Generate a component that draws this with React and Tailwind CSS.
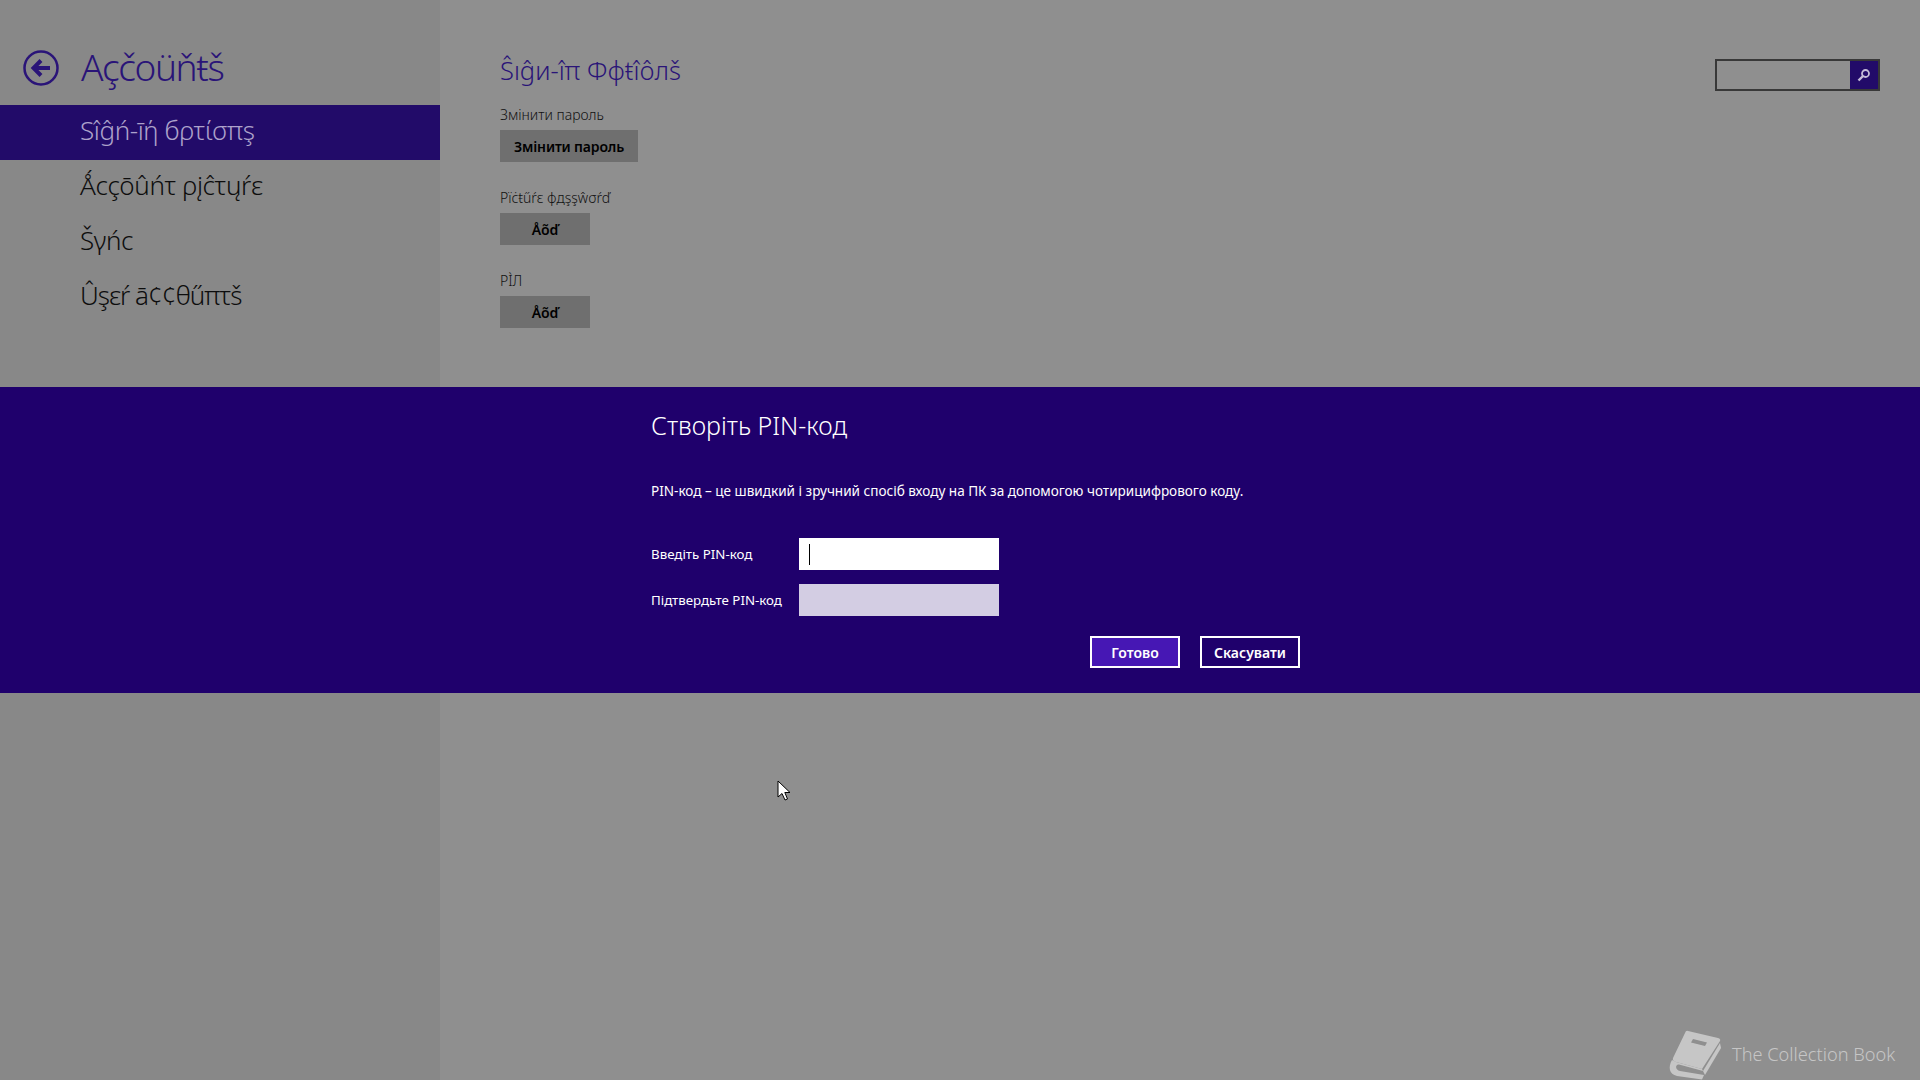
const NavItem = ({ label, active, tight }) => (
  <div
    className={`h-[55px] pl-[80px] pb-[4px] flex items-center text-[26px] font-light ${
      tight ? "tracking-[-1px]" : "tracking-[-0.4px]"
    } ${active ? "bg-[#220b69] text-[#ada2cb]" : "text-[#0d0d0d]"}`}
  >
    {label}
  </div>
);

const Field = ({ label, button, width }) => (
  <div className="mb-[19px]">
    <div className="h-[32px] pt-[6px] text-[14px] leading-[22px] text-[#111] font-light">{label}</div>
    <div className={`${width} h-[32px] bg-[#6f6f6f] flex items-center justify-center text-[14px] tracking-[-0.15px] font-semibold text-black`}>
      {button}
    </div>
  </div>
);

const App = () => {
  return (
    <div className="relative w-full h-screen overflow-hidden flex flex-col bg-[#8f8f8f] font-['Noto_Sans',sans-serif]">
      {/* TOP AREA */}
      <div className="h-[387px] flex shrink-0">
        <div className="w-[440px] bg-[#888888]">
          <div className="h-[105px] pl-[23px] pt-[50px] flex items-start gap-[22px]">
            <svg width="36" height="36" viewBox="0 0 36 36" fill="none" stroke="#2a1478">
              <circle cx="18" cy="18" r="16.5" strokeWidth="2.5" />
              <path d="M27 18H11M18 10.5L10.5 18L18 25.5" strokeWidth="4" />
            </svg>
            <div className="-mt-[2px] text-[37px] tracking-[-1.4px] leading-[38px] font-light text-[#2a1478]">Açčoüňŧš</div>
          </div>
          <NavItem label="Sîĝń-īή бρτίσπş" active />
          <NavItem label="Ǻcçōûńτ ρįĉτųŕε" />
          <NavItem label="Šγńc" />
          <NavItem label="Ûşεŕ ā¢¢θűπτš" tight />
        </div>

        <div className="flex-1 pl-[60px] pr-[40px] pt-[52px] flex justify-between items-start">
          <div>
            <div className="h-[46px] text-[25.5px] leading-[36px] font-light text-[#2a1478]">Ŝıĝи-îπ Φφŧîôлš</div>
            <Field label="Змінити пароль" button="Змінити пароль" width="w-[138px]" />
            <Field label="Ρïċŧűŕε φдşşŵσŕď" button="Åõď" width="w-[90px]" />
            <Field label="РÌЛ" button="Åõď" width="w-[90px]" />
          </div>

          <div className="mt-[7px] w-[165px] h-[32px] flex border-2 border-[#383838]">
            <div className="flex-1" />
            <div className="w-[28px] bg-[#220b69] flex items-center justify-center">
              <svg width="14" height="14" viewBox="0 0 14 14" fill="none" stroke="#c4bcd8">
                <circle cx="8.5" cy="5.5" r="3.5" strokeWidth="1.8" />
                <path d="M6 8L1.5 12.5" strokeWidth="2.4" />
              </svg>
            </div>
          </div>
        </div>
      </div>

      {/* PIN DIALOG */}
      <div className="h-[306px] shrink-0 bg-[#1f006c] pl-[651px] text-white">
        <div className="w-[649px]">
          <div className="pt-[18px] h-[72px] text-[25px] leading-[40px] font-light">Створіть PIN-код</div>
          <div className="mt-[22px] text-[13.55px] leading-[20px] text-white">
            PIN-код – це швидкий і зручний спосіб входу на ПК за допомогою чотирицифрового коду.
          </div>
          <div className="mt-[37px] flex items-center h-[32px]">
            <div className="w-[148px] pt-[1px] text-[13.3px]">Введіть PIN-код</div>
            <div className="w-[200px] h-[32px] bg-white flex items-center pl-[10px]">
              <div className="w-px h-[21px] bg-black" />
            </div>
          </div>
          <div className="mt-[14px] flex items-center h-[32px]">
            <div className="w-[148px] pt-[1px] text-[13.3px]">Підтвердьте PIN-код</div>
            <div className="w-[200px] h-[32px] bg-[#d3cde3]" />
          </div>
          <div className="mt-[20px] flex justify-end gap-[20px]">
            <button className="w-[90px] h-[32px] bg-[#4617b4] border-2 border-white text-[14px] font-semibold">Готово</button>
            <button className="w-[100px] h-[32px] border-2 border-white text-[14px] font-semibold">Скасувати</button>
          </div>
        </div>
      </div>

      {/* BOTTOM AREA */}
      <div className="flex-1 flex">
        <div className="w-[440px] bg-[#888888]" />
      </div>

      {/* CURSOR */}
      <svg className="absolute left-[777px] top-[780px]" width="14" height="22" viewBox="0 0 14 22">
        <path d="M1 1V17L5 13.5L8 20L10.5 19L7.8 12.5H13Z" fill="#fff" stroke="#000" strokeWidth="1" />
      </svg>

      {/* WATERMARK */}
      <div className="absolute left-[1660px] top-[1025px] flex items-center gap-[2px] text-[#c6c6c6]">
        <svg width="70" height="55" viewBox="0 0 70 55" fill="#c6c6c6">
          <path d="M28 6L58 13Q61 14 60 16L42 44L16 37Q12 36 13 33L25 8Q26 5 28 6Z" />
          <path d="M12 35C8 42 9 49 17 51L42 54.5L44 50L20 46C15 45 15 39 19 39.5L43 46L42 44L16 37Z" />
          <path d="M43 46L60 18L61 23L45 50Z" />
          <path d="M33 14L47 17.5L45 21L31 17.5Z" fill="#8f8f8f" />
        </svg>
        <div className="mt-[5px] text-[18.2px] font-light">The Collection Book</div>
      </div>
    </div>
  );
};

export default App;
